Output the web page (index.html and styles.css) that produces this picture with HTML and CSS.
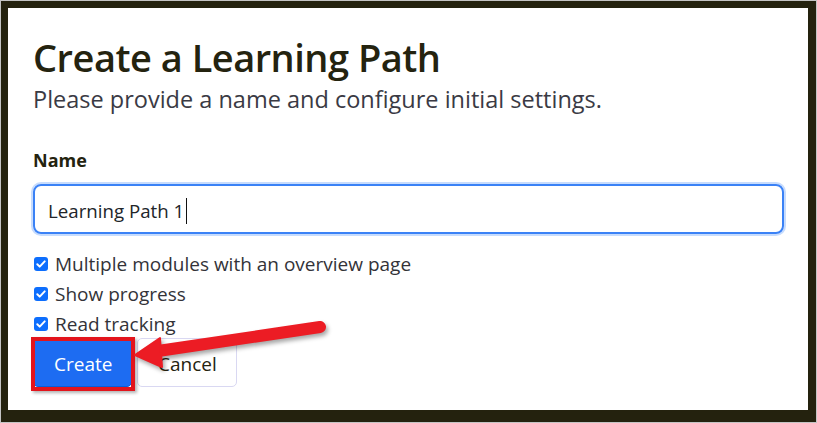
FILE: index.html
```html
<!DOCTYPE html>
<html lang="en">
<head>
<meta charset="utf-8">
<title>Create a Learning Path</title>
<link rel="stylesheet" href="styles.css">
</head>
<body>
<div class="frame">
  <div class="panel">
    <h1 class="title">Create a Learning Path</h1>
    <p class="lead">Please provide a name and configure initial settings.</p>
    <div class="field-label">Name</div>
    <div class="input">Learning Path 1<span class="caret"></span></div>
    <div class="checks">
      <div class="check"><span class="box"><svg viewBox="0 0 14 14" width="14" height="14"><path d="M3.3 7.2l2.4 2.4 5-5.2" fill="none" stroke="#fff" stroke-width="2" stroke-linecap="round" stroke-linejoin="round"/></svg></span>Multiple modules with an overview page</div>
      <div class="check"><span class="box"><svg viewBox="0 0 14 14" width="14" height="14"><path d="M3.3 7.2l2.4 2.4 5-5.2" fill="none" stroke="#fff" stroke-width="2" stroke-linecap="round" stroke-linejoin="round"/></svg></span>Show progress</div>
      <div class="check"><span class="box"><svg viewBox="0 0 14 14" width="14" height="14"><path d="M3.3 7.2l2.4 2.4 5-5.2" fill="none" stroke="#fff" stroke-width="2" stroke-linecap="round" stroke-linejoin="round"/></svg></span>Read tracking</div>
    </div>
    <div class="actions">
      <button class="btn btn-primary">Create</button>
      <button class="btn btn-secondary">Cancel</button>
    </div>
  </div>
  <div class="highlight"></div>
  <svg class="arrow" viewBox="0 0 817 423" width="817" height="423">
    <g class="arrow-shape">
      <line x1="320" y1="327" x2="158" y2="351" stroke="#ec1c24" stroke-width="12" stroke-linecap="round"/>
      <polygon points="135,355 160,338 162,367" fill="#ec1c24" stroke="#ec1c24" stroke-width="2" stroke-linejoin="round"/>
    </g>
  </svg>
</div>
</body>
</html>
```

FILE: styles.css
```css
html, body {
  margin: 0;
  padding: 0;
  background: #ffffff;
}

.frame {
  position: relative;
  box-sizing: border-box;
  width: 817px;
  height: 423px;
  border: 1px solid #c4c4c4;
  font-family: "Open Sans", "Noto Sans", sans-serif;
}

.panel {
  box-sizing: border-box;
  height: 100%;
  background: #ffffff;
  border-style: solid;
  border-color: #24220e;
  border-width: 7px 8px 12px 7px;
  padding: 25px 24px 0 25px;
}

.title {
  margin: 0;
  font-size: 38px;
  line-height: 49px;
  font-weight: 600;
  letter-spacing: -0.5px;
  color: #24230f;
}

.lead {
  margin: 1px 0 0;
  font-size: 23.5px;
  line-height: 33px;
  font-weight: 400;
  color: #3a3a44;
}

.field-label {
  margin-top: 31px;
  font-size: 18px;
  line-height: 27px;
  font-weight: 700;
  color: #24230f;
}

.input {
  box-sizing: border-box;
  margin-top: 10px;
  height: 50px;
  padding: 14px 15px 10px 13px;
  border: 2px solid #3b82f6;
  border-radius: 8px;
  box-shadow: 0 0 0 2px #c7dcfd;
  font-size: 18.7px;
  line-height: 24px;
  color: #212529;
  display: flex;
  align-items: center;
}

.caret {
  display: inline-block;
  width: 1px;
  height: 26px;
  margin-left: 2px;
  background: #111;
}

.checks {
  margin-top: 15px;
  display: flex;
  flex-direction: column;
}

.check {
  display: flex;
  align-items: center;
  gap: 7px;
  height: 30px;
  font-size: 19px;
  line-height: 30px;
  color: #333338;
}

.box {
  box-sizing: border-box;
  width: 14px;
  height: 14px;
  margin-left: 1px;
  border-radius: 3px;
  background: #0d6efd;
  display: flex;
}

.actions {
  display: flex;
  gap: 5px;
  margin-top: -1px;
}

.btn {
  box-sizing: border-box;
  height: 49px;
  padding: 3px 20px 0;
  border-radius: 5px;
  font-family: inherit;
  font-size: 19px;
  line-height: 27px;
}

.btn-primary {
  width: 99px;
  background: #1d6cf2;
  border: 1px solid #0b5ed7;
  color: #ffffff;
}

.btn-secondary {
  width: 100px;
  background: #ffffff;
  border: 1px solid #d9d8f2;
  color: #24230f;
}

.highlight {
  position: absolute;
  left: 30px;
  top: 336px;
  width: 104px;
  height: 54px;
  box-sizing: border-box;
  border: 4px solid #e3141c;
  box-shadow: 2px 2px 3px rgba(0, 0, 0, 0.3);
}

.arrow {
  position: absolute;
  left: -1px;
  top: -1px;
  pointer-events: none;
}

.arrow-shape {
  filter: drop-shadow(2px 3px 2px rgba(0, 0, 0, 0.35));
}
```
